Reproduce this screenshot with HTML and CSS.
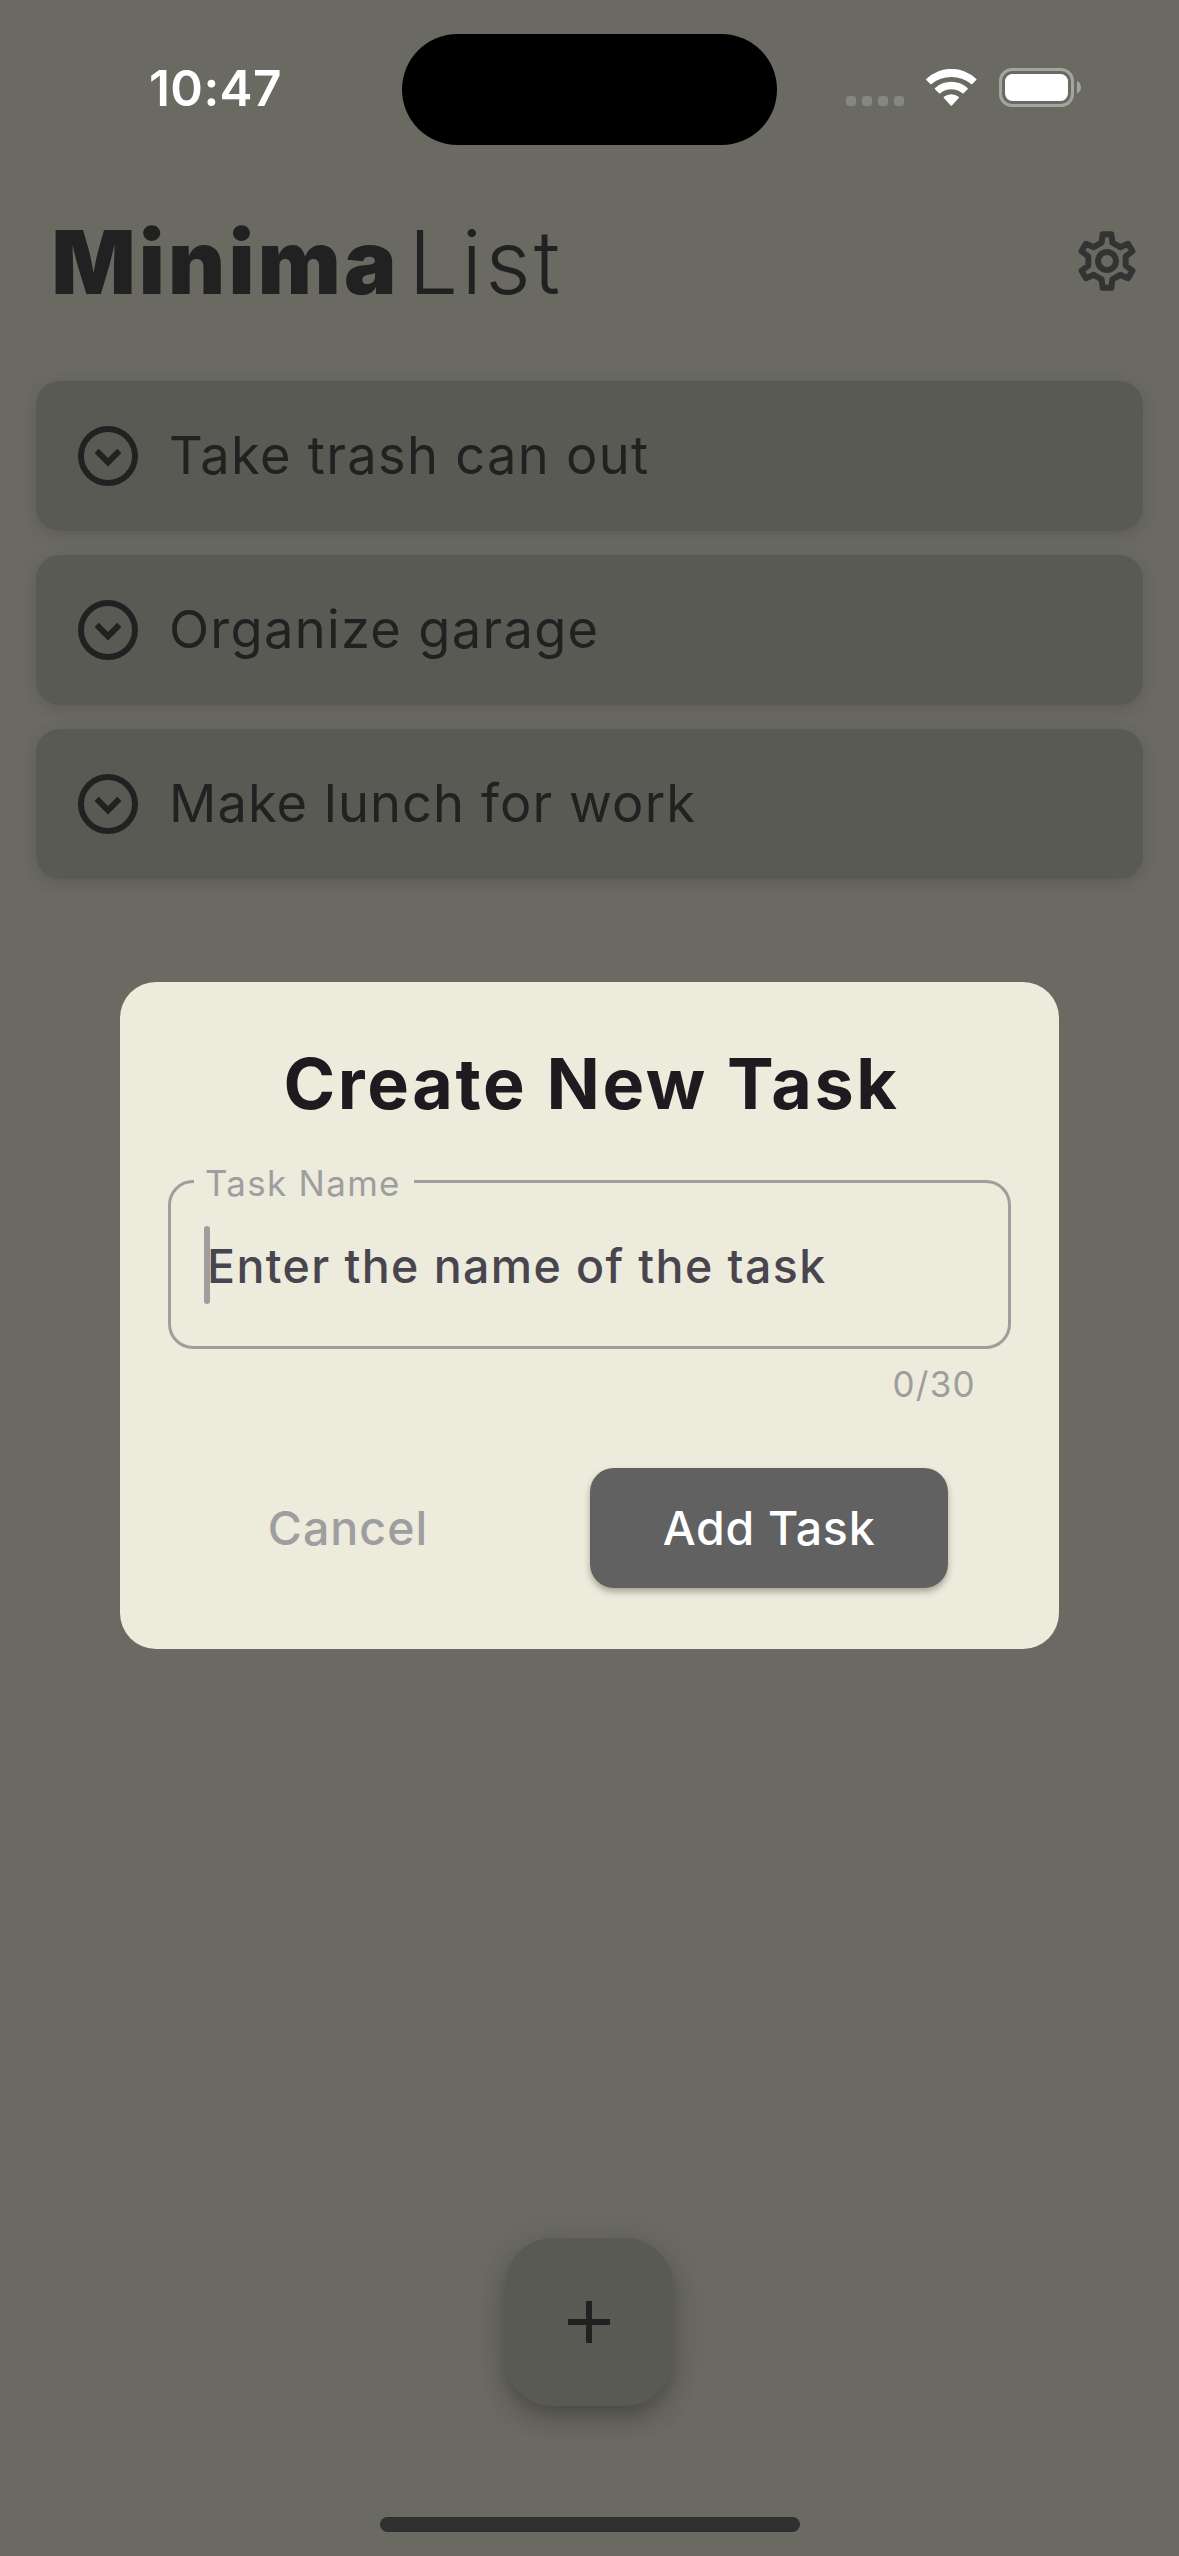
FILE: index.html
```html
<!DOCTYPE html>
<html lang="en">
<head>
<meta charset="utf-8">
<title>MinimaList</title>
<link rel="stylesheet" href="styles.css">
</head>
<body>
<div class="screen">
  <header class="status">
    <div class="status-time">10:47</div>
    <div class="island"></div>
    <div class="status-icons">
      <div class="cell"><i></i><i></i><i></i><i></i></div>
      <svg class="wifi" viewBox="0 0 50.6 37">
        <path d="M0.5 9.7A36.2 36.2 0 0 1 50.1 9.7Q50.9 10.4 50.2 11.1L46.6 14.8Q45.9 15.6 45.1 14.9A31.7 31.7 0 0 0 5.5 14.9Q4.7 15.6 4 14.8L0.4 11.1Q-0.3 10.4 0.5 9.7Z"/>
        <path d="M9.1 18.9A24.2 24.2 0 0 1 41.5 18.9Q42.3 19.6 41.6 20.3L37.8 24.1Q37.1 24.8 36.4 24.2A18 18 0 0 0 14.2 24.2Q13.5 24.8 12.8 24.1L9 20.3Q8.3 19.6 9.1 18.9Z"/>
        <path d="M17.9 27.8A12 12 0 0 1 32.7 27.8Q33.4 28.4 32.7 29.1L25.9 36.4Q25.3 37 24.7 36.4L17.9 29.1Q17.2 28.4 17.9 27.8Z"/>
      </svg>
      <svg class="battery" viewBox="0 0 82 39">
        <rect x="1.5" y="1.5" width="72" height="36" rx="11.5" fill="none" stroke="#a5a5a0" stroke-width="3"/>
        <rect x="6" y="6" width="63" height="27" rx="7.5" fill="#fff"/>
        <path d="M78 13C83.2 15 83.2 23.4 78 25.4Z" fill="#a5a5a0"/>
      </svg>
    </div>
  </header>

  <div class="topbar">
    <h1 class="brand"><b>Minima</b><span>List</span></h1>
    <svg class="gear" viewBox="-90 -90 180 180">
      <path d="M-16.1-55.4L-13-80.5H13L16.1-55.4 39.9-41.6 63.2-51.5 76.2-29 56-13.8V13.8L76.2 29 63.2 51.5 39.9 41.6 16.1 55.4 13 80.5H-13L-16.1 55.4-39.9 41.6-63.2 51.5-76.2 29-56 13.8V-13.8L-76.2-29-63.2-51.5-39.9-41.6Z"/>
      <circle r="27"/>
    </svg>
  </div>

  <ul class="tasks">
    <li class="task">
      <svg class="check" viewBox="0 0 24 24"><circle cx="12" cy="12" r="9"/><path d="M15.08 9.59L12 12.67 8.92 9.59 7.5 11 12 15.5 16.5 11Z"/></svg>
      <span>Take trash can out</span>
    </li>
    <li class="task">
      <svg class="check" viewBox="0 0 24 24"><circle cx="12" cy="12" r="9"/><path d="M15.08 9.59L12 12.67 8.92 9.59 7.5 11 12 15.5 16.5 11Z"/></svg>
      <span>Organize garage</span>
    </li>
    <li class="task">
      <svg class="check" viewBox="0 0 24 24"><circle cx="12" cy="12" r="9"/><path d="M15.08 9.59L12 12.67 8.92 9.59 7.5 11 12 15.5 16.5 11Z"/></svg>
      <span class="snug">Make lunch for work</span>
    </li>
  </ul>

  <footer class="bottom">
    <button class="fab" aria-label="Add"><svg viewBox="0 0 42 42"><path d="M0 21H42M21 0V42"/></svg></button>
    <div class="home"></div>
  </footer>

  <div class="dialog" role="dialog">
    <h2 class="dialog-title">Create New Task</h2>
    <div class="field">
      <label class="field-label">Task Name</label>
      <span class="hint">Enter the name of the task</span>
      <i class="caret"></i>
    </div>
    <div class="counter">0/30</div>
    <div class="actions">
      <button class="btn cancel">Cancel</button>
      <button class="btn add">Add Task</button>
    </div>
  </div>
</div>
</body>
</html>
```
FILE: styles.css
```css
* { box-sizing: border-box; margin: 0; padding: 0; }

body {
  font-family: Inter, "Liberation Sans", sans-serif;
  background: #6a6a62;
}

button {
  border: 0;
  font-family: inherit;
}

.screen {
  position: relative;
  display: flex;
  flex-direction: column;
  width: 1179px;
  height: 2556px;
  background: #6a6a62;
  overflow: hidden;
}

/* Status bar */
.status {
  display: grid;
  grid-template-columns: 402px 375px 402px;
  align-items: center;
  height: 177px;
}
.status-time {
  padding-left: 149px;
  padding-bottom: 2px;
  font-size: 49.5px;
  font-weight: 600;
  letter-spacing: 0.4px;
  line-height: 60px;
  color: #fff;
}
.island {
  height: 111px;
  margin-top: 1px;
  border-radius: 56px;
  background: #000;
}
.status-icons {
  display: flex;
  align-items: flex-end;
  height: 39px;
  margin-bottom: 2px;
  padding-left: 69px;
}
.cell {
  display: flex;
  gap: 6px;
  padding-bottom: 1px;
}
.cell i {
  width: 10px;
  height: 10px;
  border-radius: 3px;
  background: #868680;
}
.wifi {
  width: 50.6px;
  height: 37px;
  margin: 0 22px 1px 22.3px;
  fill: #fff;
}
.battery { width: 82px; height: 39px; }

/* App bar */
.topbar {
  display: flex;
  align-items: center;
  justify-content: space-between;
  height: 170px;
  padding: 0 42px 2px 51.5px;
}
.brand {
  display: flex;
  gap: 9px;
  font-size: 88px;
  line-height: 108px;
  letter-spacing: 3.2px;
  padding-top: 2px;
  color: #212121;
}
.brand b { font-weight: 900; }
.brand span { font-weight: 300; }
.gear {
  width: 60px;
  height: 60px;
  fill: none;
  stroke: #333;
  stroke-width: 18;
  stroke-linejoin: round;
}

/* Task list */
.tasks {
  display: flex;
  flex-direction: column;
  gap: 24px;
  margin-top: 34px;
  padding: 0 36px;
  list-style: none;
}
.task {
  display: flex;
  align-items: center;
  gap: 25px;
  height: 150px;
  padding-left: 36px;
  border-radius: 24px;
  background: #5a5a55;
  box-shadow: 0 4px 14px rgba(60, 50, 45, 0.24);
  font-size: 52.4px;
  letter-spacing: 1.3px;
  line-height: 66px;
  color: #212121;
}
.task span { padding-bottom: 2px; }
.task .snug { letter-spacing: 1.1px; }
.check { width: 72px; height: 72px; fill: #212121; }
.check circle { fill: none; stroke: #212121; stroke-width: 2; }

/* Floating button and home indicator */
.bottom {
  display: flex;
  flex-direction: column;
  align-items: center;
  gap: 111px;
  margin-top: auto;
  padding: 0 1px 24px 0;
}
.fab {
  display: flex;
  align-items: center;
  justify-content: center;
  width: 168px;
  height: 168px;
  border-radius: 48px;
  background: #5a5a55;
  box-shadow: 0 12px 22px -2px rgba(30, 28, 18, 0.34), 0 6px 30px rgba(70, 62, 58, 0.2);
}
.fab svg { width: 42px; height: 42px; stroke: #212121; stroke-width: 6; }
.home {
  width: 420px;
  height: 15px;
  margin-left: 1px;
  border-radius: 8px;
  background: #303030;
}

/* Modal dialog */
.dialog {
  position: absolute;
  left: 120px;
  top: 982.4px;
  width: 939px;
  height: 666.2px;
  padding: 57px 48px 0;
  border-radius: 36px;
  background: #ecebdc;
}
.dialog-title {
  padding-left: 4px;
  font-size: 70px;
  font-weight: 700;
  line-height: 90px;
  letter-spacing: 2.6px;
  text-align: center;
  color: #1d1b20;
}
.field {
  position: relative;
  display: flex;
  align-items: center;
  height: 169px;
  margin-top: 50.8px;
  padding: 3px 0 0 36px;
  border: 3px solid #9e9e9e;
  border-radius: 25px;
}
.field-label {
  position: absolute;
  left: 23px;
  top: -21px;
  width: 220px;
  padding-left: 11px;
  background: #ecebdc;
  font-size: 34.9px;
  line-height: 42px;
  letter-spacing: 1.33px;
  color: #9e9e9e;
}
.hint {
  font-size: 46.5px;
  font-weight: 500;
  line-height: 60px;
  letter-spacing: 1.4px;
  color: #49454f;
}
.caret {
  position: absolute;
  left: 33px;
  top: 43px;
  width: 6px;
  height: 78px;
  border-radius: 3px;
  background: #9e9e9e;
}
.counter {
  margin-top: 14px;
  padding-right: 35px;
  font-size: 35px;
  line-height: 42px;
  letter-spacing: 1.3px;
  text-align: right;
  color: #9e9e9e;
}
.actions {
  display: flex;
  gap: 120px;
  margin-top: 62.9px;
  padding-left: 60px;
}
.btn {
  height: 120px;
  border-radius: 24px;
  font-size: 46.5px;
  font-weight: 500;
  line-height: 60px;
}
.cancel {
  width: 242px;
  padding-right: 2px;
  background: none;
  letter-spacing: 1px;
  color: #9e9e9e;
}
.add {
  width: 358px;
  background: #616161;
  box-shadow: 0 4px 6px rgba(60, 55, 40, 0.38);
  letter-spacing: 0.73px;
  color: #fff;
}
```
